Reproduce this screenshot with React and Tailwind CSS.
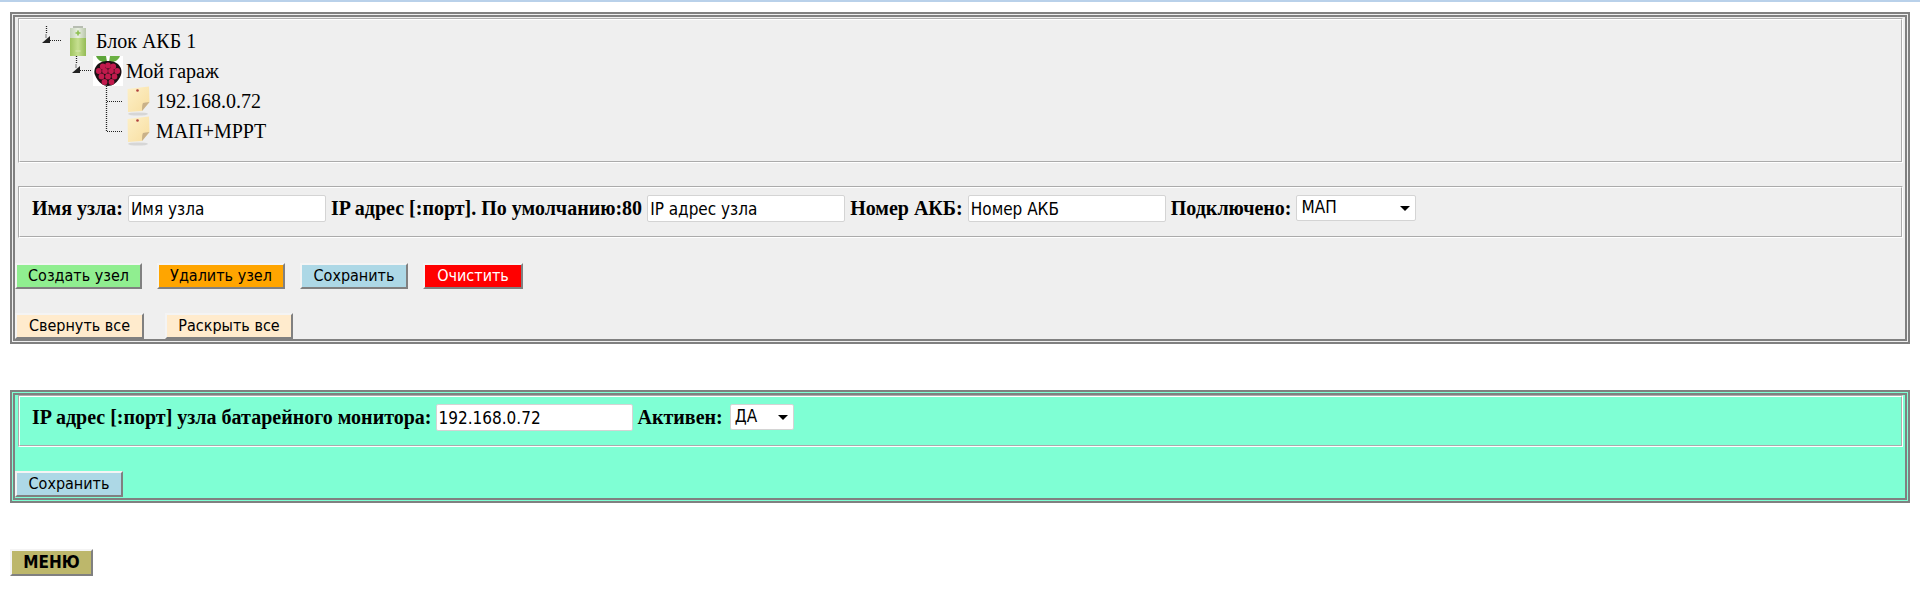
const serif = "font-['Liberation_Serif',serif]";
const sans = "font-['DejaVu_Sans',sans-serif] font-stretch-condensed";

const btn =
  `h-[26px] px-[8px] border-2 border-t-[#f4f4f4] border-l-[#f4f4f4] border-r-[#808080] border-b-[#808080] ${sans} text-[16px] leading-none text-black`;

const fieldBox = "border-2 [border-style:groove] border-white";

// tree line: elbow, optional triangle for an open node
const Connector = ({ kind }) => (
  <svg width="30" height="30" viewBox="0 0 30 30" className="shrink-0">
    {kind === "open" && (
      <>
        <path d="M14.5 0V8" stroke="#222" strokeDasharray="1 1" strokeWidth="1.3" fill="none" />
        <path d="M18 14.5H30" stroke="#222" strokeDasharray="1 1" strokeWidth="1.2" fill="none" />
        <path d="M10 17 L18 10 L18 17 Z" fill="#222" />
        <path d="M14 8V12" stroke="#777" />
      </>
    )}
    {kind === "tee" && (
      <>
        <path d="M14.5 0V30" stroke="#222" strokeDasharray="1 1" strokeWidth="1.3" fill="none" />
        <path d="M15 15.5H30" stroke="#222" strokeDasharray="1 1" strokeWidth="1.2" fill="none" />
      </>
    )}
    {kind === "end" && (
      <>
        <path d="M14.5 0V15" stroke="#222" strokeDasharray="1 1" strokeWidth="1.3" fill="none" />
        <path d="M15 15.5H30" stroke="#222" strokeDasharray="1 1" strokeWidth="1.2" fill="none" />
      </>
    )}
  </svg>
);

const BatteryIcon = () => (
  <svg width="30" height="30" viewBox="0 0 30 30" className="shrink-0 ml-px">
    <defs>
      <linearGradient id="batTop" x1="0" x2="1" y1="0" y2="0">
        <stop offset="0" stopColor="#c4d2b8" />
        <stop offset="0.5" stopColor="#eaf0e2" />
        <stop offset="1" stopColor="#b8c6aa" />
      </linearGradient>
      <linearGradient id="batBody" x1="0" x2="1" y1="0" y2="0">
        <stop offset="0" stopColor="#9fc45e" />
        <stop offset="0.5" stopColor="#c6df90" />
        <stop offset="1" stopColor="#93bb54" />
      </linearGradient>
    </defs>
    <rect x="10" y="0" width="10" height="2" fill="#b7bdb2" />
    <rect x="7" y="2" width="16" height="10" fill="url(#batTop)" />
    <rect x="7" y="12" width="16" height="18" fill="url(#batBody)" />
    <path d="M15 4.5V9.5M12.5 7H17.5" stroke="#8cbf50" strokeWidth="1.6" />
    <path d="M12.5 25H17.5" stroke="#d6e8ae" strokeWidth="1.2" />
  </svg>
);

const RaspberryIcon = () => {
  const berries = [
    [15, 9.5], [9.8, 10.5], [20.2, 10.5],
    [5.8, 15], [12, 15], [18, 15], [24.2, 15],
    [8.5, 20.5], [15, 20.5], [21.5, 20.5],
    [11.5, 26], [18.5, 26],
  ];
  return (
    <svg width="30" height="30" viewBox="0 0 30 30" className="shrink-0 ml-px bg-white">
      <path d="M14 6 C10 7 5 5 3 0 H13 Z" fill="#5da53a" />
      <path d="M16 6 C20 7 25 5 27 0 H17 Z" fill="#6bb043" />
      <path d="M15 5 C3 5 0 14 2 19 C5 27 11 30 15 30 C19 30 25 27 28 19 C30 14 27 5 15 5 Z" fill="#1c1014" />
      {berries.map(([x, y]) => (
        <circle key={`${x}-${y}`} cx={x} cy={y} r="2.9" fill="#c21a4d" />
      ))}
    </svg>
  );
};

const NoteIcon = () => (
  <svg width="30" height="30" viewBox="0 0 30 30" className="shrink-0 ml-px">
    <defs>
      <linearGradient id="noteBody" x1="0" x2="1" y1="0" y2="1">
        <stop offset="0" stopColor="#fdf0c8" />
        <stop offset="1" stopColor="#f8dea0" />
      </linearGradient>
    </defs>
    <ellipse cx="15" cy="28" rx="10" ry="1.6" fill="#d6d6d6" />
    <path d="M4.5 3 Q15 1.5 26 0.5 L26.5 16 L19 25 Q11 25.5 5 26 Z" fill="url(#noteBody)" />
    <path d="M26.5 16 L19 25 Q19 18 20 17 Q22 16.5 26.5 16 Z" fill="#c9b189" />
    <circle cx="14.5" cy="4.5" r="1.3" fill="#b0413e" />
  </svg>
);

const TreeRow = ({ indent, kind, icon, label }) => (
  <div className={`flex items-center h-[30px] ${indent}`}>
    <Connector kind={kind} />
    {icon}
    <span className={`${serif} text-[20px] text-black ml-[3px] leading-none`}>{label}</span>
  </div>
);

const Label = ({ children, className = "" }) => (
  <span className={`${serif} font-bold text-[20px] leading-[26px] text-black whitespace-nowrap ${className}`}>{children}</span>
);

const Input = ({ width, value }) => (
  <input
    readOnly
    value={value}
    className={`${width} h-[27px] px-[2px] bg-white border border-[#d4d4d4] rounded-[2px] ${sans} text-[17px] text-black`}
  />
);

const Select = ({ width, value, className = "" }) => (
  <div className={`relative ${width} h-[26px] bg-white border border-[#d4d4d4] rounded-[2px] flex items-center px-[4px] ${sans} text-[17px] text-black ${className}`}>
    {value}
    <svg width="10" height="5" viewBox="0 0 10 5" className="absolute right-[5px] top-[10px]">
      <path d="M0 0H10L5 5Z" fill="#000" />
    </svg>
  </div>
);

export default function App() {
  return (
    <div className="min-h-[601px] bg-white">
      <div className="h-[2px] bg-[#b9d1ea]" />

      <div className="mt-[10px] mx-[10px] h-[332px] border-[5px] border-double border-[#808080] bg-[#efefef]">
        <div className={`${fieldBox} mt-px ml-[3px] mr-[2px] h-[145px] pt-[6px] pl-[12px]`}>
          <TreeRow indent="pl-0" kind="open" icon={<BatteryIcon />} label="Блок АКБ 1" />
          <TreeRow indent="pl-[30px]" kind="open" icon={<RaspberryIcon />} label="Мой гараж" />
          <TreeRow indent="pl-[60px]" kind="tee" icon={<NoteIcon />} label="192.168.0.72" />
          <TreeRow indent="pl-[60px]" kind="end" icon={<NoteIcon />} label="МАП+MPPT" />
        </div>

        <div className={`${fieldBox} mt-[23px] ml-[3px] mr-[2px] h-[52px] pl-[12px] flex items-start pt-[7px] gap-[5px]`}>
          <Label>Имя узла:</Label>
          <Input width="w-[198px]" value="Имя узла" />
          <Label>IP адрес [:порт]. По умолчанию:80</Label>
          <Input width="w-[198px]" value="IP адрес узла" />
          <Label>Номер АКБ:</Label>
          <Input width="w-[198px]" value="Номер АКБ" />
          <Label>Подключено:</Label>
          <Select width="w-[120px]" value="МАП" />
        </div>

        <div className="mt-[25px] flex gap-[15px]">
          <button className={`${btn} w-[127px] bg-[#90ee90]`}>Создать узел</button>
          <button className={`${btn} w-[128px] bg-[#ffa500]`}>Удалить узел</button>
          <button className={`${btn} w-[108px] bg-[#add8e6]`}>Сохранить</button>
          <button className={`${btn} w-[100px] bg-[#ff0000] text-white`}>Очистить</button>
        </div>

        <div className="mt-[24px] flex gap-[21px]">
          <button className={`${btn} w-[129px] bg-[#ffebcd]`}>Свернуть все</button>
          <button className={`${btn} w-[128px] bg-[#ffebcd]`}>Раскрыть все</button>
        </div>
      </div>

      <div className="mt-[46px] mx-[10px] h-[113px] border-[5px] border-double border-[#808080] bg-[#7fffd4]">
        <div className={`${fieldBox} ml-[3px] mr-[2px] h-[52px] pl-[12px] flex items-start pt-[7px] gap-[4px]`}>
          <Label>IP адрес [:порт] узла батарейного монитора:</Label>
          <Input width="w-[197px]" value="192.168.0.72" />
          <Label className="ml-px">Активен:</Label>
          <Select width="w-[64px]" value="ДА" className="ml-[3px]" />
        </div>
        <div className="mt-[24px] flex">
          <button className={`${btn} w-[108px] bg-[#add8e6]`}>Сохранить</button>
        </div>
      </div>

      <div className="mt-[46px] ml-[10px]">
        <button className={`${btn} h-[27px] w-[83px] px-0 bg-[#bdb76b] font-bold text-[17px] border-t-[#e6e6e6] border-l-[#e6e6e6]`}>МЕНЮ</button>
      </div>
    </div>
  );
}
